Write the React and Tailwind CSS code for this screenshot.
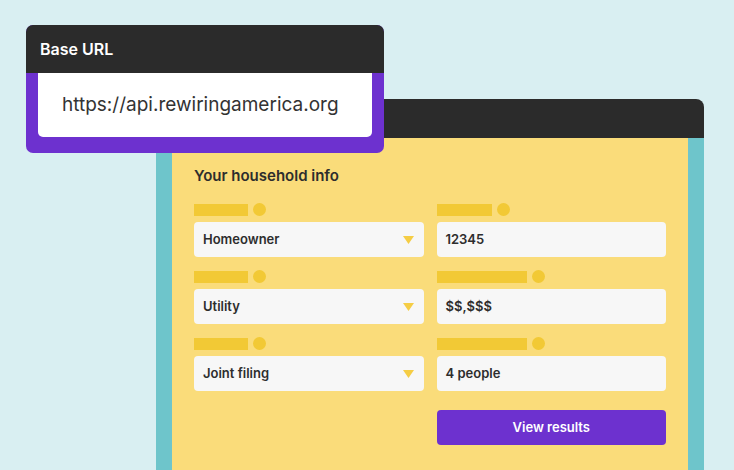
import React from "react";

const font = { fontFamily: "Inter, 'Noto Sans', sans-serif" };

function Label({ w }) {
  return (
    <div className="flex items-center gap-[5px] h-[13px]">
      <div className={`h-[12px] bg-[#f2c935] ${w}`} />
      <div className="w-[13px] h-[13px] rounded-full bg-[#f2c935]" />
    </div>
  );
}

function Caret() {
  return (
    <svg width="11" height="8" viewBox="0 0 11 8">
      <path d="M0 0 H11 L5.5 8 Z" fill="#f5cd45" />
    </svg>
  );
}

function Field({ w, text, select }) {
  return (
    <div className="flex flex-col gap-[6px]">
      <Label w={w} />
      <div className="h-[35px] rounded-[4px] bg-[#f7f7f7] flex items-center justify-between pl-[9px] pr-[10px]">
        <span className="text-[13px] font-semibold text-[#2d2d2d]">{text}</span>
        {select && <Caret />}
      </div>
    </div>
  );
}

export default function App() {
  return (
    <div
      className="relative w-[734px] h-[470px] overflow-hidden bg-[#d9eff2]"
      style={font}
    >
      <div className="pt-[99px] pl-[156px]">
        <div className="w-[548px]">
          <div className="h-[39px] bg-[#2b2b2b] rounded-t-[8px]" />
          <div className="bg-[#6ec5cb] px-[16px] h-[340px]">
            <div className="bg-[#fadc7a] h-full pl-[22px] pr-[22px] pt-[28px]">
              <div className="text-[15px] leading-[20px] font-semibold text-[#2d2d2d]">
                Your household info
              </div>
              <div className="grid grid-cols-2 gap-x-[13px] gap-y-[13px] mt-[17px]">
                <Field w="w-[54px]" text="Homeowner" select />
                <Field w="w-[55px]" text="12345" />
                <Field w="w-[54px]" text="Utility" select />
                <Field w="w-[90px]" text="$$,$$$" />
                <Field w="w-[54px]" text="Joint filing" select />
                <Field w="w-[90px]" text="4 people" />
                <div />
                <div className="mt-[6px] h-[35px] rounded-[4px] bg-[#6d31cf] flex items-center justify-center text-white text-[13px] font-semibold">
                  View results
                </div>
              </div>
            </div>
          </div>
        </div>
      </div>

      <div className="absolute left-[26px] top-[25px] w-[358px] rounded-[7px] overflow-hidden bg-[#6d31cf]">
        <div className="h-[48px] bg-[#2b2b2b] flex items-center pl-[14px] text-white text-[16px] font-semibold">
          Base URL
        </div>
        <div className="px-[12px] pb-[16px]">
          <div className="h-[64px] bg-white rounded-b-[5px] flex items-center pl-[24px] text-[19px] text-[#333333]">
            https://api.rewiringamerica.org
          </div>
        </div>
      </div>
    </div>
  );
}
